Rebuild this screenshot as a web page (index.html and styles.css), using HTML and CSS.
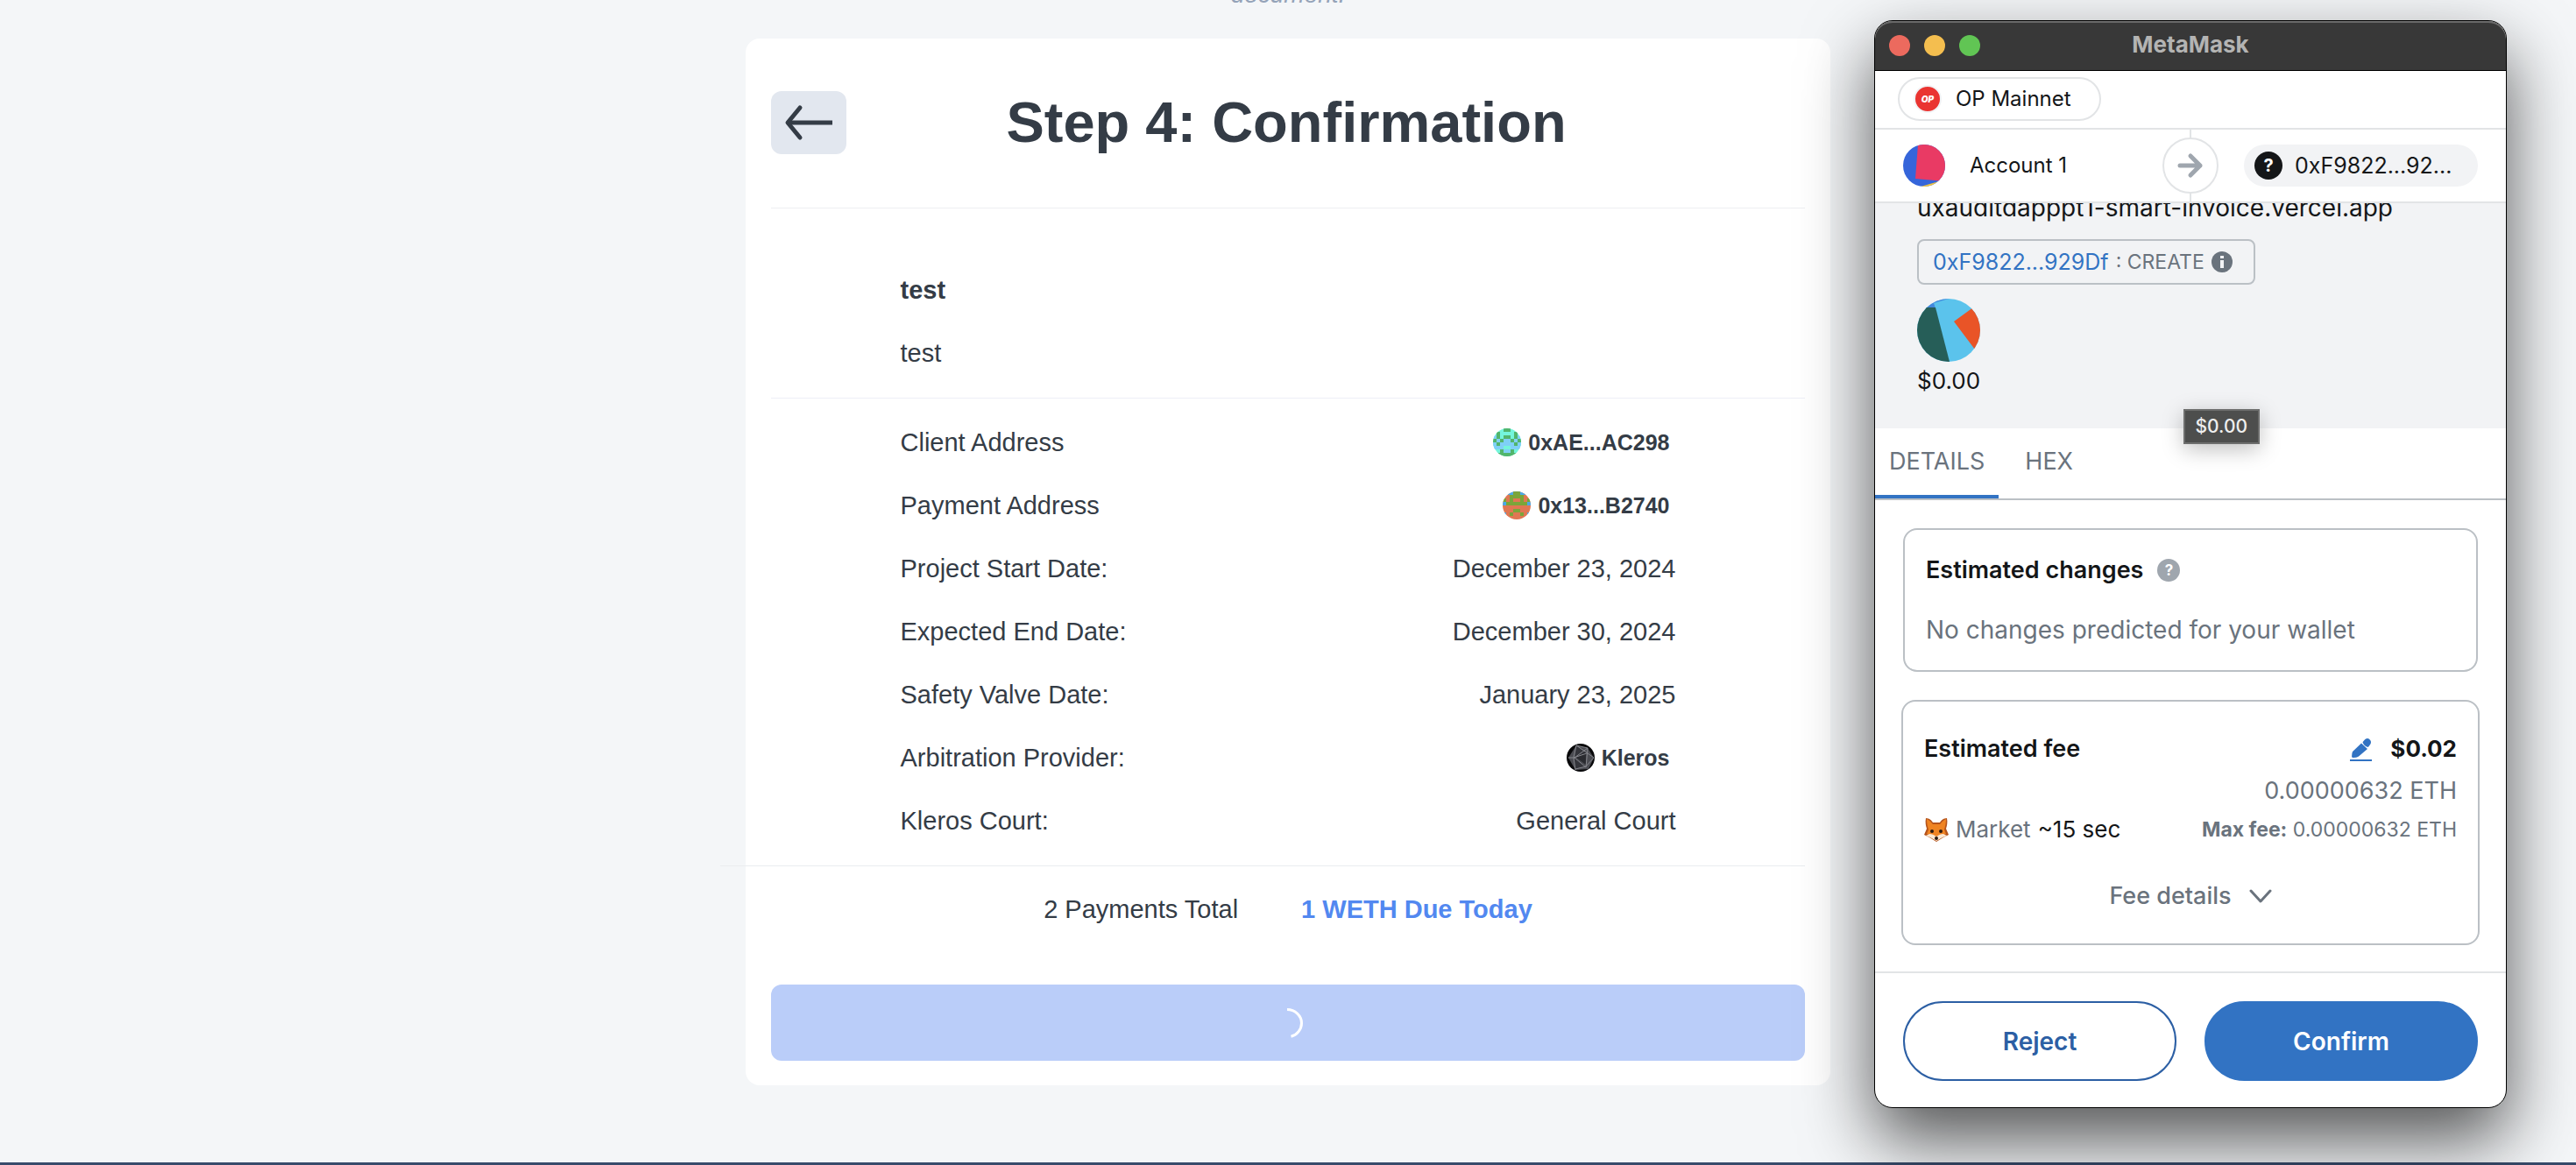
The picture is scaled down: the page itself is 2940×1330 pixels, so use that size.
FILE: index.html
```html
<!DOCTYPE html>
<html lang="en">
<head>
<meta charset="utf-8">
<title>Smart Invoice</title>
<link rel="stylesheet" href="styles.css">
</head>
<body>
<div class="page">
  <p class="page-note">document.</p>

  <main class="card">
    <header class="card-header">
      <button class="back" type="button" aria-label="Back">
        <svg width="56" height="52" viewBox="0 0 56 52" fill="none" stroke="#343c46" stroke-width="5" stroke-linecap="round" stroke-linejoin="round"><path d="M18 9 4 26l14 17"/><path d="M4 26h51" stroke-linecap="butt"/></svg>
      </button>
      <h1 class="card-title">Step 4: Confirmation</h1>
    </header>

    <section class="project">
      <p class="line line-strong">test</p>
      <p class="line">test</p>
    </section>

    <dl class="facts">
      <div class="line fact"><dt>Client Address</dt>
        <dd class="tagged">
          <svg class="avatar" viewBox="0 0 8 8" shape-rendering="crispEdges"><defs><clipPath id="round"><circle cx="4" cy="4" r="4"/></clipPath></defs>
            <g clip-path="url(#round)"><path fill="#74f5dc" d="M0 0h8v8H0z"/><path fill="#7fd0f7" d="M0 2h1v1H0zM7 2h1v1H7zM1 3h6v3H1zM0 4h8v2H0zM3 6h2v1H3z"/><path fill="#74f5dc" d="M3 5h2v1H3z"/><path fill="#52b56c" d="M3 0h2v1H3zM1 1h1v2H1zM6 1h1v2H6zM3 2h2v1H3zM0 3h1v1H0zM2 3h1v1H2zM5 3h1v1H5zM7 3h1v1H7zM1 4h1v1H1zM6 4h1v1H6zM2 6h1v1H2zM5 6h1v1H5zM1 7h6v1H1z"/></g></svg>
          <b>0xAE...AC298</b></dd></div>
      <div class="line fact"><dt>Payment Address</dt>
        <dd class="tagged">
          <svg class="avatar" viewBox="0 0 8 8" shape-rendering="crispEdges">
            <g clip-path="url(#round)"><path fill="#e07753" d="M0 0h8v8H0z"/><path fill="#4ba9e8" d="M0 0h8v1H0zM0 3h1v1H0zM7 3h1v1H7zM0 6h1v1H0zM7 6h1v1H7z"/><path fill="#7ba53a" d="M3 0h2v1H3zM2 1h4v1H2zM0 2h1v1H0zM2 2h1v1H2zM5 2h1v1H5zM7 2h1v1H7zM1 3h6v1H1zM3 5h2v1H3zM2 6h1v1H2zM5 6h1v1H5z"/></g></svg>
          <b>0x13...B2740</b></dd></div>
      <div class="line fact"><dt>Project Start Date:</dt><dd>December 23, 2024</dd></div>
      <div class="line fact"><dt>Expected End Date:</dt><dd>December 30, 2024</dd></div>
      <div class="line fact"><dt>Safety Valve Date:</dt><dd>January 23, 2025</dd></div>
      <div class="line fact"><dt>Arbitration Provider:</dt>
        <dd class="tagged">
          <svg class="avatar" viewBox="0 0 32 32"><circle cx="16" cy="16" r="16" fill="#08080a"/><path d="M11 2 24 5l7 11-6 13-15 1-8-14z" fill="#4b4c52"/><path d="m11 2 13 10L9 16zM9 16l13 10-13 3z" fill="#34353b"/><path d="M11 16 22 9v15z" fill="#2a2b30"/><g fill="none" stroke="#85868c" stroke-width="1"><path d="M11 2 8 16l2 14M2 16h7L24 5l-2 22L9 16"/><path d="m11 2 13 9 7 5-9 10-12 3M24 5 11 2M8 16l15-5"/></g></svg>
          <b>Kleros</b></dd></div>
      <div class="line fact"><dt>Kleros Court:</dt><dd>General Court</dd></div>
    </dl>

    <div class="totals">
      <span>2 Payments Total</span>
      <strong>1 WETH Due Today</strong>
    </div>

    <button class="submit" type="button" aria-label="Submitting">
      <svg width="36" height="36" viewBox="0 0 36 36" fill="none" stroke="#fff" stroke-width="3"><path d="M17 2.500c9 0 16.500 7 16.500 15.500 0 7-5 13.500-12 15.300"/></svg>
    </button>
  </main>

  <footer class="page-footer"></footer>
</div>

<aside class="wallet">
  <header class="titlebar">
    <div class="lights"><i class="light light-red"></i><i class="light light-amber"></i><i class="light light-green"></i></div>
    <h2 class="titlebar-name">MetaMask</h2>
  </header>

  <div class="network">
    <button class="network-pill" type="button"><span class="op">OP</span>OP Mainnet</button>
  </div>

  <div class="parties">
    <div class="sender">
      <svg width="48" height="48" viewBox="0 0 48 48"><defs><clipPath id="disc"><circle cx="24" cy="24" r="24"/></clipPath></defs><g clip-path="url(#disc)"><path fill="#3565da" d="M0 0h48v48H0z"/><path fill="#e93a64" d="M17 0h31v42l-34-3z"/><path fill="#f4c63d" d="m20 48 21-6v6z"/></g></svg>
      Account 1
    </div>
    <div class="direction"><span class="direction-ring">
      <svg width="32" height="32" viewBox="0 0 32 32" fill="none" stroke="#9fa6ae" stroke-width="5" stroke-linecap="round" stroke-linejoin="round"><path d="M4 16h23M16 5l11 11-11 11"/></svg></span></div>
    <div class="recipient"><span class="mark mark-dark">?</span>0xF9822...92...</div>
  </div>

  <section class="summary">
    <p class="origin">uxauditdapppt1-smart-invoice.vercel.app</p>
    <div class="call">
      <a class="call-address" href="#">0xF9822...929Df</a>
      <span class="call-name">: CREATE</span>
      <svg width="24" height="24" viewBox="0 0 24 24"><circle cx="12" cy="12" r="12" fill="#6a737d"/><path fill="#f2f3f5" d="M10 5h4v3h-4zM10 10h4v9h-4z"/></svg>
    </div>
    <svg class="token" width="72" height="72" viewBox="0 0 72 72"><defs><clipPath id="coin"><circle cx="36" cy="36" r="36"/></clipPath></defs><g clip-path="url(#coin)"><path fill="#5bc3ec" d="M0 0h72v72H0z"/><path fill="#4287dc" d="M0 0h36L19 5l2 6H0z"/><path fill="#265e58" d="M0 10h21l16 62H0z"/><path fill="#e95427" d="M42 26 64 10l20 20-18 28z"/></g></svg>
    <p class="amount">$0.00</p>
    <span class="tooltip" role="tooltip">$0.00</span>
  </section>

  <div class="tabs" role="tablist">
    <button class="tab tab-active" type="button" role="tab" aria-selected="true">DETAILS</button>
    <button class="tab" type="button" role="tab" aria-selected="false">HEX</button>
  </div>

  <div class="panels">
    <section class="panel changes">
      <h3 class="panel-title">Estimated changes <span class="mark mark-grey">?</span></h3>
      <p class="changes-text">No changes predicted for your wallet</p>
    </section>

    <section class="panel fee">
      <div class="fee-row">
        <h3 class="panel-title">Estimated fee</h3>
        <span class="fee-value">
          <button class="edit" type="button" aria-label="Edit fee"><svg width="26" height="28" viewBox="0 0 26 28" fill="#3273c3"><path d="M13 7.500 20 14 10 22.500c-1 .8-2 1-3 1.200l-3 .3c-1.500.2-2-.5-1.900-1.700l.3-3c.2-1.300.4-2 1.200-2.800zM14.500 6.300c3-4 5.500-5.500 8-3 2.800 2.700 1.400 5.400-1.800 8.700-3-.7-5.400-2.700-6.200-5.700z"/><path d="M0 26h25v2H0z"/></svg></button>
          <b>$0.02</b>
        </span>
      </div>
      <p class="fee-eth">0.00000632 ETH</p>
      <div class="fee-row">
        <span class="speed"><svg width="28" height="28" viewBox="0 0 28 28"><path fill="#b5541c" d="M2 1c4 0 7 3 8 5h8c1-2 4-5 8-5 1 5 0 9-1 12l3 7-6 3-8 5-8-5-6-3 3-7C2 10 1 6 2 1z"/><path fill="#ef8423" d="M3 2c4 2 5 4 7 6h8c2-2 3-4 7-6 0 5-1 9-2 12l2 5-11 3-11-3 2-5C4 11 3 7 3 2z"/><path fill="#fbe9d4" d="m2 21 4-2c3 0 5 1 8 3 3-2 5-3 8-3l4 2-5 2-7 4-7-4z"/><circle cx="9" cy="16" r="2" fill="#2a1a12"/><circle cx="19" cy="16" r="2" fill="#2a1a12"/><ellipse cx="14" cy="24" rx="2" ry="2" fill="#2a1a12"/></svg>
          <span class="muted">Market</span> ~15 sec</span>
        <span class="max-fee"><b>Max fee:</b> 0.00000632 ETH</span>
      </div>
      <button class="fee-toggle" type="button">Fee details
        <svg width="26" height="16" viewBox="0 0 26 16" fill="none" stroke="#6a737d" stroke-width="3" stroke-linecap="round" stroke-linejoin="round"><path d="m2 2 11 12L24 2"/></svg>
      </button>
    </section>
  </div>

  <footer class="actions">
    <button class="action action-reject" type="button">Reject</button>
    <button class="action action-confirm" type="button">Confirm</button>
  </footer>
</aside>
</body>
</html>
```
FILE: styles.css
```css
* {
  box-sizing: border-box;
}

body,
h1,
h2,
h3,
p,
dl,
dd {
  margin: 0;
}

body {
  position: relative;
  overflow: hidden;
  background: #f4f6f8;
}

button {
  padding: 0;
  border: 0;
  background: none;
  font: inherit;
  color: inherit;
}

svg {
  display: block;
  flex: none;
}

/* Invoice page */
.page {
  display: flex;
  flex-direction: column;
  min-height: 100vh;
  font-family: "Liberation Sans", Arial, sans-serif;
  font-size: 29px;
  color: #343c46;
}

.page-note {
  margin: -24px 0 32px;
  font-size: 28px;
  font-style: italic;
  line-height: 36px;
  text-align: center;
  color: #94a3b8;
}

.card {
  display: flex;
  flex-direction: column;
  width: 100%;
  max-width: 1238px;
  margin: 0 auto;
  padding: 60px 29px 28px;
  border-radius: 16px;
  background: #fff;
}

.card-header {
  display: grid;
  grid-template-columns: 86px 1fr 90px;
  align-items: center;
  padding-bottom: 61px;
  border-bottom: 1px solid #eeeff2;
}

.back {
  display: flex;
  align-items: center;
  justify-content: center;
  height: 72px;
  border-radius: 12px;
  background: #e2e7ef;
}

.card-title {
  font-size: 65px;
  line-height: 72px;
  text-align: center;
}

.line {
  line-height: 72px;
}

.line-strong {
  font-weight: bold;
}

.project {
  padding: 57px 12.5% 15px;
  border-bottom: 1px solid #eeeff7;
}

.facts {
  padding: 14px 12.5% 15px;
}

.fact {
  display: flex;
  justify-content: space-between;
}

.tagged {
  display: flex;
  align-items: center;
  gap: 8px;
  padding-right: 7px;
  font-size: 25px;
}

.avatar {
  width: 32px;
  height: 32px;
}

.totals {
  display: flex;
  justify-content: center;
  gap: 72px;
  margin-left: -58px;
  padding: 13px 0 50px 58px;
  border-top: 1px solid #eaecef;
  line-height: 72px;
}

.totals strong {
  color: #5288f0;
}

.submit {
  display: flex;
  align-items: center;
  justify-content: center;
  height: 87px;
  border-radius: 12px;
  background: #bacdf9;
}

.page-footer {
  height: 3px;
  margin-top: auto;
  background: #384b6b;
}

/* Wallet window floating over the page */
.wallet {
  position: absolute;
  top: 23px;
  right: 79px;
  width: 722px;
  border: 1px solid #000;
  border-radius: 21px;
  background: #fff;
  box-shadow: 0 36px 80px rgba(0, 0, 0, 0.66);
  font-family: Inter, sans-serif;
  font-size: 27px;
  line-height: 36px;
  color: #141618;
}

.titlebar {
  display: grid;
  grid-template-columns: 1fr auto 1fr;
  align-items: center;
  height: 57px;
  padding: 0 16px;
  border-bottom: 1px solid #000;
  border-radius: 20px 20px 0 0;
  background: #383838;
  box-shadow: inset 0 2px 0 #6a6a6a;
}

.lights {
  display: flex;
  gap: 16px;
}

.light {
  width: 24px;
  height: 24px;
  border-radius: 50%;
}

.light-red {
  background: #ec6a5e;
}

.light-amber {
  background: #f4be4f;
}

.light-green {
  background: #61c554;
}

.titlebar-name {
  padding-bottom: 2px;
  font-size: 26px;
  color: #b4b4b3;
}

.network {
  padding: 7px 26px 8px;
  border-bottom: 2px solid #e2e4e6;
}

.network-pill {
  display: flex;
  align-items: center;
  gap: 16px;
  height: 50px;
  padding: 0 32px 0 16px;
  border: 2px solid #e2e4e6;
  border-radius: 25px;
  font-size: 24px;
}

.op {
  width: 32px;
  height: 32px;
  border: 2px solid #f2f3f5;
  border-radius: 50%;
  background: #ea3431;
  font-size: 10px;
  font-style: italic;
  font-weight: 900;
  line-height: 28px;
  color: #fff;
}

.parties {
  display: grid;
  grid-template-columns: 1fr 64px 1fr;
  align-items: center;
  height: 84px;
  padding: 0 32px;
  border-bottom: 2px solid #e2e4e6;
}

.sender {
  display: flex;
  align-items: center;
  gap: 28px;
  font-size: 24px;
}

.direction {
  display: grid;
  place-items: center;
  height: 100%;
  background: linear-gradient(#e2e4e6, #e2e4e6) center / 2px 100% no-repeat;
}

.direction-ring {
  display: grid;
  place-items: center;
  width: 64px;
  height: 64px;
  border: 2px solid #e2e4e6;
  border-radius: 50%;
  background: #fff;
}

.recipient {
  display: flex;
  align-items: center;
  gap: 14px;
  height: 48px;
  margin-left: 29px;
  padding-left: 12px;
  border-radius: 24px;
  background: #f2f3f5;
  font-size: 25px;
  white-space: nowrap;
}

.mark {
  flex: none;
  border-radius: 50%;
  font-weight: 700;
  text-align: center;
}

.mark-dark {
  width: 32px;
  height: 32px;
  background: #141618;
  font-size: 20px;
  line-height: 32px;
  color: #fff;
}

.mark-grey {
  width: 26px;
  height: 26px;
  background: #9fa6ae;
  font-size: 17px;
  line-height: 26px;
  color: #fff;
}

.summary {
  position: relative;
  padding: 0 48px 36px;
  background: #f2f3f5;
  clip-path: inset(0 0 -60px);
}

.summary::before {
  content: "";
  display: table;
}

.origin {
  margin-top: -13px;
  font-size: 28px;
}

.call {
  display: flex;
  align-items: center;
  gap: 8px;
  width: fit-content;
  height: 52px;
  margin: 18px 0 16px;
  padding: 0 24px 0 16px;
  border: 2px solid #bbc0c5;
  border-radius: 8px;
  color: #6a737d;
}

.call-address {
  font-size: 25px;
  text-decoration: none;
  color: #3273c3;
}

.call-name {
  font-size: 23px;
}

.amount {
  margin-top: 4px;
  font-size: 26px;
}

.tooltip {
  position: absolute;
  right: 281px;
  bottom: -18px;
  padding: 0 12px;
  border: 2px solid #6d6e6d;
  background: #4d4e4d;
  box-shadow: 0 6px 24px rgba(0, 0, 0, 0.25);
  font-size: 21px;
  font-weight: 500;
  color: #eee;
}

.tabs {
  display: flex;
  gap: 14px;
  border-bottom: 2px solid #bbc0c5;
  color: #6a737d;
}

.tab {
  padding: 20px 16px;
  border-bottom: 4px solid transparent;
}

.tab-active {
  border-color: #3273c3;
}

.panels {
  display: flex;
  flex-direction: column;
  gap: 32px;
  padding: 32px 30px 30px;
}

.panel {
  border: 2px solid #bbc0c5;
  border-radius: 16px;
}

.changes {
  display: grid;
  gap: 32px;
  margin: 0 2px;
  padding: 28px 24px;
}

.changes-text {
  font-size: 28px;
  color: #6a737d;
}

.panel-title {
  display: flex;
  align-items: center;
  gap: 16px;
  font-size: 27px;
  font-weight: 600;
}

.muted {
  color: #6a737d;
}

.fee {
  padding: 36px 24px;
}

.fee-row {
  display: flex;
  justify-content: space-between;
}

.fee-value {
  display: flex;
  align-items: center;
  gap: 20px;
  font-size: 26px;
}

.fee-eth {
  margin: 12px 0 8px;
  text-align: right;
  color: #6a737d;
}

.speed {
  display: flex;
  align-items: center;
  gap: 8px;
  font-size: 26px;
}

.max-fee {
  font-size: 23px;
  color: #6a737d;
}

.max-fee b {
  font-weight: 700;
}

.fee-toggle {
  display: flex;
  align-items: center;
  gap: 20px;
  margin: 40px auto 0;
  font-weight: 500;
  color: #6a737d;
}

.actions {
  display: grid;
  grid-template-columns: 1fr 1fr;
  gap: 32px;
  padding: 32px 32px 30px;
  border-top: 2px solid #e2e4e6;
}

.action {
  height: 91px;
  border: 2px solid #2c5fa4;
  border-radius: 46px;
  font-size: 28px;
  font-weight: 600;
  color: #2c5fa4;
}

.action-confirm {
  border-color: #3273c3;
  background: #3273c3;
  color: #fff;
}
```
